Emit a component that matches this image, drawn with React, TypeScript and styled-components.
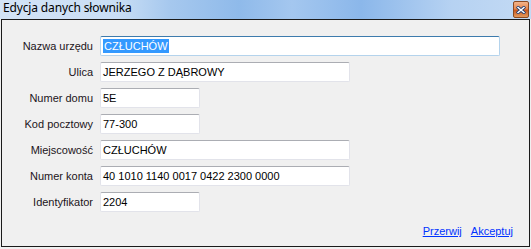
import React from 'react'
import styled, { createGlobalStyle } from 'styled-components'

type Field = {
  label: string
  value: string
  size: 'long' | 'mid' | 'short'
  focused?: boolean
}

const fields: Field[] = [
  { label: 'Nazwa urzędu', value: 'CZŁUCHÓW', size: 'long', focused: true },
  { label: 'Ulica', value: 'JERZEGO Z DĄBROWY', size: 'mid' },
  { label: 'Numer domu', value: '5E', size: 'short' },
  { label: 'Kod pocztowy', value: '77-300', size: 'short' },
  { label: 'Miejscowość', value: 'CZŁUCHÓW', size: 'mid' },
  { label: 'Numer konta', value: '40 1010 1140 0017 0422 2300 0000', size: 'mid' },
  { label: 'Identyfikator', value: '2204', size: 'short' },
]

const widths = { long: 400, mid: 250, short: 100 }

const GlobalStyle = createGlobalStyle`
  html, body {
    margin: 0;
    padding: 0;
    background: #f0f0f0;
  }
  body {
    font-family: 'Liberation Sans', Arial, sans-serif;
    font-size: 11px;
  }
`

export default function App() {
  return (
    <>
      <GlobalStyle />
      <StyledWindow>
        <StyledTitleBar>
          <StyledTitle>Edycja danych słownika</StyledTitle>
          <StyledCloseButton>
            <svg width="10" height="8" viewBox="0 0 10 8">
              <path d="M1 0.5 L9 7.5 M9 0.5 L1 7.5" stroke="#1d3a6e" strokeWidth="3.2" />
              <path d="M1.5 1 L8.5 7 M8.5 1 L1.5 7" stroke="#fff" strokeWidth="1.6" />
            </svg>
          </StyledCloseButton>
        </StyledTitleBar>
        <StyledFrame>
          <StyledForm>
            {fields.map((f) => (
              <React.Fragment key={f.label}>
                <StyledLabel>{f.label}</StyledLabel>
                <StyledInput $width={widths[f.size]} $focused={f.focused}>
                  {f.focused ? <StyledSelection>{f.value}</StyledSelection> : f.value}
                </StyledInput>
              </React.Fragment>
            ))}
          </StyledForm>
          <StyledActions>
            <StyledLink>Przerwij</StyledLink>
            <StyledLink>Akceptuj</StyledLink>
          </StyledActions>
        </StyledFrame>
      </StyledWindow>
    </>
  )
}

const StyledWindow = styled.div`
  width: 531px;
  height: 249px;
  display: flex;
  flex-direction: column;
  background: #f0f0f0;
  overflow: hidden;
`
const StyledTitleBar = styled.div`
  height: 19px;
  display: flex;
  align-items: flex-start;
  justify-content: space-between;
  padding: 0 2px 0 3px;
  background: linear-gradient(
    90deg,
    #d3e4f6 0%,
    #c9def5 22%,
    #a6c8ee 32%,
    #8fbaea 45%,
    #a4c7ef 55%,
    #8bb7ea 68%,
    #b6d2f2 85%,
    #c3daf4 100%
  );
`
const StyledTitle = styled.span`
  font-family: 'Noto Sans', 'Open Sans', sans-serif;
  font-size: 12px;
  line-height: 16px;
  color: #000;
  letter-spacing: -0.15px;
`
const StyledCloseButton = styled.div`
  width: 14px;
  height: 15px;
  margin-top: 1px;
  border: 1px solid #8a4a22;
  border-radius: 2px;
  display: flex;
  align-items: center;
  justify-content: center;
  background: linear-gradient(180deg, #f3b48a 0%, #e6884f 45%, #c9571e 55%, #e49a5d 100%);
`
const StyledFrame = styled.div`
  width: 529px;
  height: 228px;
  margin-left: 1px;
  box-sizing: border-box;
  border: 1px solid #1a1a1a;
  display: flex;
  flex-direction: column;
  justify-content: space-between;
  padding: 16px 16px 9px 0;
`
const StyledForm = styled.div`
  display: grid;
  grid-template-columns: 91px auto;
  column-gap: 7px;
  row-gap: 6px;
  justify-content: start;
  align-items: center;
`
const StyledLabel = styled.span`
  text-align: right;
  color: #1c1420;
  white-space: nowrap;
`
const StyledInput = styled.div<{ $width: number; $focused?: boolean }>`
  width: ${({ $width }) => $width}px;
  height: 20px;
  box-sizing: border-box;
  display: flex;
  align-items: center;
  padding: 0 0 0 2px;
  background: #fff;
  color: #000;
  white-space: nowrap;
  border-radius: 2px;
  border: 1px solid ${({ $focused }) => ($focused ? '#b4d3ec' : '#e2e3ea')};
  border-top-color: ${({ $focused }) => ($focused ? '#3d7bad' : '#abadb3')};
`
const StyledSelection = styled.span`
  background: #3399ff;
  color: #fff;
  padding: 1px 1px;
`
const StyledActions = styled.div`
  display: flex;
  justify-content: flex-end;
  gap: 9px;
`
const StyledLink = styled.span`
  color: #0033ff;
  text-decoration: underline;
  cursor: pointer;
`
